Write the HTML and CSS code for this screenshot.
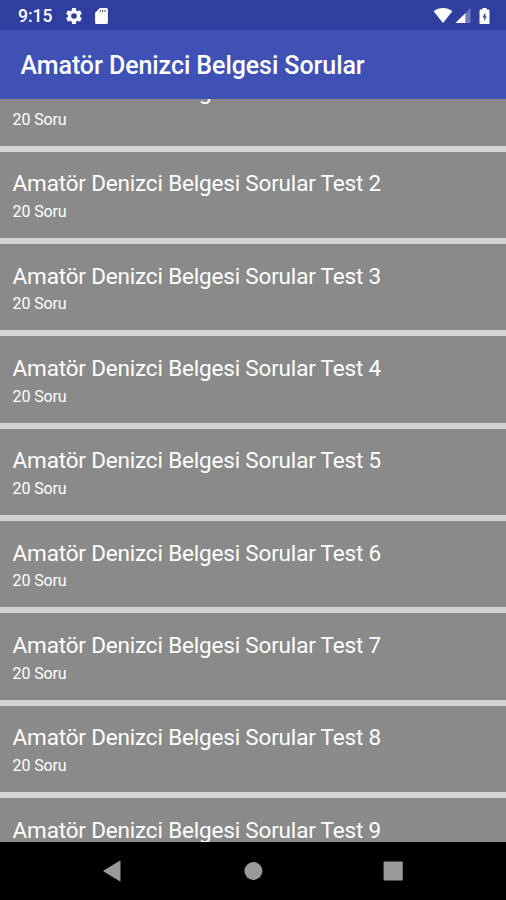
FILE: index.html
```html
<!DOCTYPE html>
<html lang="tr">
<head>
<meta charset="utf-8">
<title>Amatör Denizci Belgesi Sorular</title>
<link rel="stylesheet" href="styles.css">
</head>
<body>
<div class="status">
  <span class="clock">9:15</span>
  <svg class="gear" viewBox="2 2 20 20"><path fill-rule="evenodd" d="M19.43 12.98c.04-.32.07-.64.07-.98s-.03-.66-.07-.98l2.11-1.65c.19-.15.24-.42.12-.64l-2-3.46c-.12-.22-.39-.3-.61-.22l-2.49 1c-.52-.4-1.08-.73-1.69-.98l-.38-2.65A.49.49 0 0 0 14 2h-4c-.25 0-.46.18-.49.42l-.38 2.65c-.61.25-1.17.59-1.69.98l-2.49-1c-.23-.09-.49 0-.61.22l-2 3.46c-.13.22-.07.49.12.64l2.11 1.65c-.04.32-.07.65-.07.98s.03.66.07.98l-2.11 1.65c-.19.15-.24.42-.12.64l2 3.46c.12.22.39.3.61.22l2.49-1c.52.4 1.08.73 1.69.98l.38 2.65c.03.24.24.42.49.42h4c.25 0 .46-.18.49-.42l.38-2.65c.61-.25 1.17-.59 1.69-.98l2.49 1c.23.09.49 0 .61-.22l2-3.46c.12-.22.07-.49-.12-.64zM12 15.5a3.5 3.5 0 1 1 0-7 3.5 3.5 0 0 1 0 7z"/></svg>
  <svg class="card" viewBox="4 2 16 20"><path fill-rule="evenodd" d="M18 2h-8L4 8v12c0 1.100.9 2 2 2h12c1.100 0 2-.9 2-2V4c0-1.100-.9-2-2-2zm-7 2.500v2.500h-1.200v-2.500zm3 0v2.500h-1.200v-2.500zm3 0v2.500h-1.200v-2.500z"/></svg>
  <svg class="wifi" viewBox="0 0 20 16"><path d="M10 16 0 3.500C3 1.200 6.400 0 10 0s7 1.200 10 3.500z"/></svg>
  <svg class="signal" viewBox="0 0 16 16"><path class="faint" d="M0 16 16 0v16z"/><path d="M0 16 10.500 5.500V16z"/></svg>
  <svg class="battery" viewBox="0 0 10 16"><path fill-rule="evenodd" d="M3 0h4v1.600h2q1 0 1 1V15q0 1-1 1H1q-1 0-1-1V2.600q0-1 1-1h2zM5.800 4.500 3 9.300h1.800v4L7.200 8.400H5.800z"/></svg>
</div>
<header class="toolbar"><h1>Amatör Denizci Belgesi Sorular</h1></header>
<main class="viewport">
  <ul class="list">
    <li><h2>Amatör Denizci Belgesi Sorular Test 1</h2><p>20 Soru</p></li>
    <li><h2>Amatör Denizci Belgesi Sorular Test 2</h2><p>20 Soru</p></li>
    <li><h2>Amatör Denizci Belgesi Sorular Test 3</h2><p>20 Soru</p></li>
    <li><h2>Amatör Denizci Belgesi Sorular Test 4</h2><p>20 Soru</p></li>
    <li><h2>Amatör Denizci Belgesi Sorular Test 5</h2><p>20 Soru</p></li>
    <li><h2>Amatör Denizci Belgesi Sorular Test 6</h2><p>20 Soru</p></li>
    <li><h2>Amatör Denizci Belgesi Sorular Test 7</h2><p>20 Soru</p></li>
    <li><h2>Amatör Denizci Belgesi Sorular Test 8</h2><p>20 Soru</p></li>
    <li><h2>Amatör Denizci Belgesi Sorular Test 9</h2></li>
  </ul>
</main>
<nav class="navbar">
  <svg viewBox="0 0 20 22"><path d="M17.500 1.200v19.600q0 .8-.8.400L.6 11.500q-.6-.5 0-1L16.700.8q.8-.4.8.4z"/></svg>
  <svg viewBox="0 0 20 22"><circle cx="10.400" cy="11" r="9"/></svg>
  <svg viewBox="0 0 20 22"><rect x=".6" y="1.600" width="19.200" height="19" rx="1"/></svg>
</nav>
</body>
</html>
```

FILE: styles.css
```css
* {
  box-sizing: border-box;
}

body {
  margin: 0;
  height: 900px;
  display: flex;
  flex-direction: column;
  overflow: hidden;
  background: #8a8a8a;
  color: #fff;
  font-family: Roboto, sans-serif;
}

h1, h2, p, ul {
  margin: 0;
  padding: 0;
  font-weight: 400;
  white-space: nowrap;
}

svg {
  display: block;
  flex: none;
  fill: #fff;
}

.status {
  flex: none;
  height: 30px;
  padding: 1px 16px 0 18px;
  display: flex;
  align-items: center;
  background: #303f9f;
}

.clock {
  width: 48px;
  font-size: 17.5px;
  font-weight: 500;
}

.gear {
  width: 16px;
  height: 16px;
}

.card {
  width: 13px;
  height: 16px;
  margin-left: 13px;
}

.wifi {
  width: 20px;
  height: 15px;
  margin-left: auto;
}

.signal {
  width: 16px;
  height: 15px;
  margin-left: 2px;
}

.faint {
  opacity: 0.3;
}

.battery {
  width: 11px;
  height: 16px;
  margin-left: 8px;
}

.toolbar {
  flex: none;
  height: 69px;
  padding: 2px 20.5px 0;
  display: flex;
  align-items: center;
  background: #3f51b5;
}

.toolbar h1 {
  font-size: 25px;
  font-weight: 500;
  letter-spacing: -0.07px;
}

.viewport {
  flex: 1;
  min-height: 0;
  overflow: hidden;
}

.list {
  margin-top: -39.7px;
  list-style: none;
}

.list li {
  height: 92.33px;
  padding: 17.8px 12.6px 0;
  border-bottom: 6px solid #d3d3d3;
}

.list h2 {
  height: 28px;
  font-size: 22.5px;
  line-height: 28px;
  letter-spacing: -0.18px;
}

.list p {
  height: 20px;
  margin-top: 4.5px;
  font-size: 16px;
  line-height: 20px;
  letter-spacing: -0.12px;
}

.navbar {
  flex: none;
  height: 58px;
  padding: 0 103px;
  display: flex;
  align-items: center;
  justify-content: space-between;
  background: #000;
}

.navbar svg {
  width: 20px;
  height: 22px;
  fill: #999;
}
```
